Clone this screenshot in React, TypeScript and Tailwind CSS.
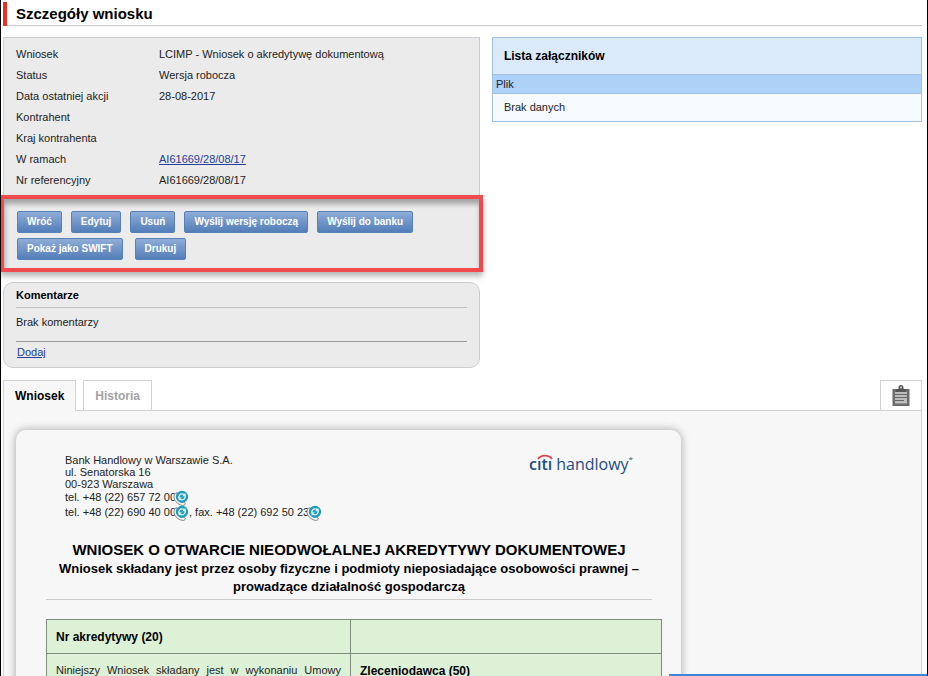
import React, { useState } from "react";

const details = [
  { label: "Wniosek", value: "LCIMP - Wniosek o akredytywę dokumentową" },
  { label: "Status", value: "Wersja robocza" },
  { label: "Data ostatniej akcji", value: "28-08-2017" },
  { label: "Kontrahent", value: "" },
  { label: "Kraj kontrahenta", value: "" },
  { label: "W ramach", value: "AI61669/28/08/17", link: true },
  { label: "Nr referencyjny", value: "AI61669/28/08/17" },
];

function ActionButton({ children }: { children: React.ReactNode }) {
  return (
    <button
      type="button"
      className="h-[22px] rounded-xs border border-[#5580b8] bg-linear-to-b from-[#8fadd8] to-[#537eb8] px-[9px] text-[10px] leading-5 font-bold whitespace-nowrap text-white"
    >
      {children}
    </button>
  );
}

// click-to-call icon after every phone number
function CallIcon() {
  return (
    <svg
      className="-my-1 -ml-[3px] inline-block h-4 w-4 align-middle"
      viewBox="0 0 16 16"
      fill="none"
    >
      <path
        d="M3.600 2.700C.3 3.700.2 8.600 2.900 11.700c2.400 2.800 6 4.300 8.600 3.500l.9-1.900-2.600-2-1.800 1C5.800 11.200 3.800 8.800 3.200 6.600l1.400-1.300z"
        fill="#f4f4f4"
        stroke="#85898c"
        strokeWidth="1"
      />
      <circle cx="9" cy="6.800" r="6.100" fill="#1f9bbd" />
      <path
        d="M5.900 8.300C5.300 5.700 7.200 3.700 9.300 3.800c1.200 0 2 .5 2.600 1.200M12.200 5.300c.6 2.600-1.300 4.600-3.400 4.500-1.200 0-2-.5-2.600-1.200"
        stroke="#e8fafe"
        strokeWidth="1.300"
      />
      <path d="M12.500 3v3.200H9.300zM5.700 10.700V7.500h3.200z" fill="#e8fafe" />
    </svg>
  );
}

function ClipboardIcon() {
  return (
    <svg className="h-[21px] w-[18px]" viewBox="0 0 18 21">
      <path d="M.5 4h17v17H.5z" fill="#6c6c6c" />
      <path d="M3 7h12v11.500H3z" fill="#bdbdbd" />
      <path d="M3 9.500h12M3 12.500h12M3 15.500h9" stroke="#666" strokeWidth="1.200" />
      <path d="M4 7V4h2.500V2.500C6.500 1 7.500 0 9 0s2.500 1 2.500 2.500V4H14v3z" fill="#555" />
      <circle cx="9" cy="2.600" r="1" fill="#ddd" />
    </svg>
  );
}

function Logo() {
  return (
    <div className="relative flex items-baseline gap-1 font-['Open_Sans','Noto_Sans',sans-serif] text-base leading-5 text-[#1c4c80]">
      <svg className="absolute top-0 left-2 h-[6px] w-4" viewBox="0 0 16 6" fill="none">
        <path d="M1 5C4 .6 12 .6 15 5" stroke="#d9474b" strokeWidth="1.800" />
      </svg>
      <span className="font-semibold">cıtı</span>
      <span>
        handlowy<sup className="-top-2 text-[8px]">*</sup>
      </span>
    </div>
  );
}

export default function App() {
  const [tab, setTab] = useState("wniosek");

  return (
    <div className="h-screen overflow-hidden border-x border-black bg-white pr-[5px] pl-[2px] font-['Liberation_Sans',Arial,sans-serif] text-[11px] text-[#222]">
      <div className="flex h-full flex-col">
        <header className="flex shrink-0 pt-0.5">
          <div className="w-1 bg-[#ee2e24]"></div>
          <h1 className="grow border-b border-[#c4c9cf] pl-[9px] text-[15px] leading-[23px] font-bold text-black">
            Szczegóły wniosku
          </h1>
        </header>

        <div className="mt-[11px] flex shrink-0 items-start gap-3">
          <div className="w-[51.9%] shrink-0">
            <section className="border border-[#c9cdd0] bg-[#ebebeb] px-3 pt-[6px] pb-[9px]">
              <dl className="grid grid-cols-[143px_1fr] leading-[21px]">
                {details.map((d) => (
                  <React.Fragment key={d.label}>
                    <dt>{d.label}</dt>
                    <dd>
                      {d.link ? (
                        <a href="#ramach" className="text-[#23409a] underline">
                          {d.value}
                        </a>
                      ) : (
                        d.value
                      )}
                    </dd>
                  </React.Fragment>
                ))}
              </dl>
              <div className="relative mt-5 flex flex-col gap-[5px] pl-px">
                {/* highlight around the actions */}
                <div className="pointer-events-none absolute -inset-x-4 -top-4 -bottom-3 border-4 border-[#f2494c] shadow-[0_4px_6px_rgba(0,0,0,0.3),inset_1px_5px_5px_rgba(0,0,0,0.3)]"></div>
                <div className="flex gap-[9px]">
                  <ActionButton>Wróć</ActionButton>
                  <ActionButton>Edytuj</ActionButton>
                  <ActionButton>Usuń</ActionButton>
                  <ActionButton>Wyślij wersję roboczą</ActionButton>
                  <ActionButton>Wyślij do banku</ActionButton>
                </div>
                <div className="flex gap-3">
                  <ActionButton>Pokaż jako SWIFT</ActionButton>
                  <ActionButton>Drukuj</ActionButton>
                </div>
              </div>
            </section>

            <section className="mt-3 rounded-[10px] border border-[#c9cdd0] bg-[#ebebeb] px-3 pb-1">
              <h2 className="border-b border-[#c4c4c4] leading-6 font-bold text-black">
                Komentarze
              </h2>
              <p className="border-b border-[#999] pt-1 pb-2 leading-[21px]">Brak komentarzy</p>
              <a href="#dodaj" className="ml-px inline-block leading-[21px] text-[#23409a] underline">
                Dodaj
              </a>
            </section>
          </div>

          <table className="grow border border-[#9fc1e2] text-left">
            <caption className="border border-b-0 border-[#9fc1e2] bg-[#dbeafb] px-[11px] text-left text-xs leading-9 font-bold text-black">
              Lista załączników
            </caption>
            <thead>
              <tr className="border-b border-[#9fc1e2] bg-[#aed1f7]">
                <th className="pl-[3px] leading-[18px] font-normal">Plik</th>
              </tr>
            </thead>
            <tbody>
              <tr className="bg-[#f6faff]">
                <td className="pl-[11px] leading-[27px]">Brak danych</td>
              </tr>
            </tbody>
          </table>
        </div>

        <nav className="mt-3 flex h-[31px] shrink-0 items-stretch text-xs font-bold">
          <button
            type="button"
            onClick={() => setTab("wniosek")}
            className="border border-b-0 border-[#d0d3d6] bg-[#f7f7f7] px-[11px] text-black"
          >
            Wniosek
          </button>
          <div className="w-[7px] border-b border-[#d0d3d6]"></div>
          <button
            type="button"
            onClick={() => setTab("historia")}
            className="border border-[#d0d3d6] px-[11px] text-[#a3a3a3]"
          >
            Historia
          </button>
          <div className="grow border-b border-[#d0d3d6]"></div>
          <button
            type="button"
            aria-label="Schowek"
            className="flex w-[42px] items-center justify-center border border-[#d0d3d6]"
          >
            <ClipboardIcon />
          </button>
        </nav>

        <main className="grow border-x border-[#d0d3d6] bg-[#f7f7f7] px-3 pt-[19px]">
          {tab === "wniosek" && (
            <article className="h-full w-[665px] rounded-t-[10px] bg-[#f7f7f7] px-[30px] pt-6 shadow-[0_0_9px_rgba(0,0,0,0.35)]">
              <div className="flex justify-between pr-[18px] pl-[19px]">
                <address className="leading-[12px] not-italic">
                  <p>Bank Handlowy w Warszawie S.A.</p>
                  <p>ul. Senatorska 16</p>
                  <p>00-923 Warszawa</p>
                  <p className="leading-[14px]">
                    tel. +48 (22) 657 72 00
                    <CallIcon />
                  </p>
                  <p className="leading-4">
                    tel. +48 (22) 690 40 00
                    <CallIcon />, fax. +48 (22) 692 50 23
                    <CallIcon />
                  </p>
                </address>
                <Logo />
              </div>

              <div className="mr-[-1px] border-b border-[#ccc] pt-5 pb-[3px] text-center font-bold text-black">
                <h2 className="text-[15px] leading-5">
                  WNIOSEK O OTWARCIE NIEODWOŁALNEJ AKREDYTYWY DOKUMENTOWEJ
                </h2>
                <p className="text-[13px] leading-[18px]">
                  Wniosek składany jest przez osoby fizyczne i podmioty nieposiadające osobowości
                  prawnej – <br />
                  prowadzące działalność gospodarczą
                </p>
              </div>

              <table className="mt-[19px] w-[616px] table-fixed border-collapse bg-[#dcf1d6]">
                <tbody>
                  <tr className="h-[34px]">
                    <td className="w-[304px] border border-[#7d8a7d] px-[9px] text-xs font-bold text-black">
                      Nr akredytywy (20)
                    </td>
                    <td className="border border-[#7d8a7d]"></td>
                  </tr>
                  <tr className="h-[34px]">
                    <td className="border border-[#7d8a7d] px-[9px] text-justify [text-align-last:justify]">
                      Niniejszy Wniosek składany jest w wykonaniu Umowy
                    </td>
                    <td className="border border-[#7d8a7d] px-[9px] text-xs font-bold text-black">
                      Zleceniodawca (50)
                    </td>
                  </tr>
                </tbody>
              </table>
            </article>
          )}
        </main>
      </div>
      <div className="fixed right-px bottom-0 h-0.5 w-[258px] bg-[#3f85d6]"></div>
    </div>
  );
}
